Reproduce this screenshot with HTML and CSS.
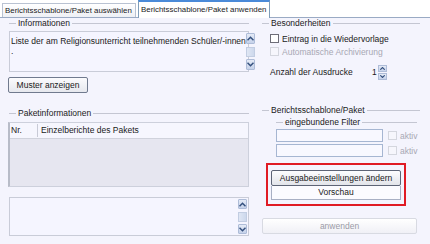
FILE: index.html
```html
<!DOCTYPE html>
<html>
<head>
<meta charset="utf-8">
<link rel="stylesheet" href="styles.css">
</head>
<body>
<div class="tabs">
  <div class="tab">Berichtsschablone/Paket auswählen</div>
  <div class="tab active">Berichtsschablone/Paket anwenden</div>
</div>
<div class="panel">
  <div class="col left">
    <div class="gtitle t1"><span class="lead"></span><span class="gt">Informationen</span><span class="rule"></span></div>
    <div class="memo m1">
      <div class="memotext">Liste der am Religionsunterricht teilnehmenden Schüler/-innen<br>.</div>
      <div class="sbar">
        <div class="sbtn"><svg class="ico" width="7" height="5" viewBox="0 0 7 5"><path d="M0.5 4.2 L3.5 1.2 L6.5 4.2" fill="none" stroke="#34507e" stroke-width="1.5"/></svg></div>
        <div class="thumb"></div>
        <div class="sbtn"><svg class="ico" width="7" height="5" viewBox="0 0 7 5"><path d="M0.5 0.8 L3.5 3.8 L6.5 0.8" fill="none" stroke="#34507e" stroke-width="1.5"/></svg></div>
      </div>
    </div>
    <div class="btn muster">Muster anzeigen</div>
    <div class="gtitle t2"><span class="lead"></span><span class="gt">Paketinformationen</span><span class="rule"></span></div>
    <div class="grid">
      <div class="ghead"><div class="gc nr">Nr.</div><div class="gc">Einzelberichte des Pakets</div></div>
      <div class="gbody"></div>
    </div>
    <div class="memo m2">
      <div class="memotext"></div>
      <div class="sbar">
        <div class="sbtn"><svg class="ico" width="7" height="5" viewBox="0 0 7 5"><path d="M0.5 4.2 L3.5 1.2 L6.5 4.2" fill="none" stroke="#34507e" stroke-width="1.5"/></svg></div>
        <div class="thumb"></div>
        <div class="sbtn"><svg class="ico" width="7" height="5" viewBox="0 0 7 5"><path d="M0.5 0.8 L3.5 3.8 L6.5 0.8" fill="none" stroke="#34507e" stroke-width="1.5"/></svg></div>
      </div>
    </div>
  </div>
  <div class="col right">
    <div class="gtitle t3"><span class="lead"></span><span class="gt">Besonderheiten</span><span class="rule"></span></div>
    <div class="chk r1"><span class="box"></span><span>Eintrag in die Wiedervorlage</span></div>
    <div class="chk r2 disabled"><span class="box"></span><span>Automatische Archivierung</span></div>
    <div class="count">
      <span>Anzahl der Ausdrucke</span>
      <div class="spin">
        <span class="val">1</span>
        <div class="spinbtns">
          <div class="sp"><svg class="ico" width="5" height="3" viewBox="0 0 5 3"><path d="M0.3 2.7 L2.5 0.5 L4.7 2.7" fill="none" stroke="#34507e" stroke-width="1.1"/></svg></div>
          <div class="sp"><svg class="ico" width="5" height="3" viewBox="0 0 5 3"><path d="M0.3 0.3 L2.5 2.5 L4.7 0.3" fill="none" stroke="#34507e" stroke-width="1.1"/></svg></div>
        </div>
      </div>
    </div>
    <div class="gtitle t4"><span class="lead"></span><span class="gt">Berichtsschablone/Paket</span><span class="rule"></span></div>
    <div class="gtitle t5"><span class="lead"></span><span class="gt">eingebundene Filter</span><span class="rule"></span></div>
    <div class="filter f1"><span class="inp"></span><span class="box dis"></span><span class="akt">aktiv</span></div>
    <div class="filter f2"><span class="inp"></span><span class="box dis"></span><span class="akt">aktiv</span></div>
    <div class="hl">
      <div class="btn ausg">Ausgabeeinstellungen ändern</div>
      <div class="vorschau">Vorschau</div>
    </div>
    <div class="btn anw">anwenden</div>
  </div>
</div>
</body>
</html>
```

FILE: styles.css
```css
html, body {
  margin: 0;
  padding: 0;
}
body {
  width: 430px;
  height: 244px;
  overflow: hidden;
  background: #f4f4fd;
  font-family: "Liberation Sans", Arial, sans-serif;
  font-size: 8.5px;
  color: #1a1a1a;
}
.ico {
  display: block;
  flex: none;
}
.tabs {
  height: 18px;
  background: #ffffff;
  border-bottom: 1px solid #9aaac4;
  box-sizing: border-box;
  display: flex;
  align-items: flex-end;
  padding-left: 2px;
  gap: 2px;
}
.tab {
  height: 14px;
  line-height: 13px;
  padding: 0 0 0 2px;
  box-sizing: border-box;
  border: 1px solid #b9c2d2;
  border-bottom: none;
  background: linear-gradient(#ffffff, #eef0f5);
  width: 134px;
  white-space: nowrap;
  font-size: 7.9px;
}
.tab.active {
  width: 132px;
  height: 18px;
  line-height: 15px;
  background: #ffffff;
  border: 1px solid #7f9db9;
  border-top: 2px solid #4a8ad8;
  border-bottom: none;
  margin-bottom: -1px;
}
.panel {
  display: flex;
  padding-left: 8px;
}
.col {
  display: flex;
  flex-direction: column;
}
.left {
  width: 241px;
}
.right {
  width: 158px;
  margin-left: 13px;
}
.gtitle {
  display: flex;
  align-items: center;
  height: 11px;
  white-space: nowrap;
}
.gtitle .lead {
  width: 7px;
  height: 1px;
  background: #c4c6d2;
  margin-right: 2px;
}
.gtitle .rule {
  flex: 1;
  height: 1px;
  background: #c4c6d2;
  margin-left: 2px;
}
.gt { line-height: 11px; }
.t1 { margin-top: 0px; margin-left: 1px; }
.memo {
  display: flex;
  border: 1px solid #c9ccd8;
  background: #f5f5ff;
  box-sizing: border-box;
  margin-left: 1px;
}
.m1 {
  height: 41px;
  margin-top: 2px;
}
.memotext {
  flex: 1;
  padding: 4px 0 0 1px;
  line-height: 10px;
  white-space: nowrap;
}
.sbar {
  width: 9px;
  margin: 1px 1px 1px 0;
  display: flex;
  flex-direction: column;
  justify-content: space-between;
}
.sbtn {
  height: 11px;
  background: linear-gradient(#e4eaf6, #c6d2ea);
  border: 1px solid #aebcd8;
  box-sizing: border-box;
  display: flex;
  align-items: center;
  justify-content: center;
  border-radius: 1px;
}
.thumb {
  height: 10px;
  background: linear-gradient(90deg, #dfe6f4, #cdd8ec);
  border: 1px solid #c2cde2;
  box-sizing: border-box;
}
.btn {
  box-sizing: border-box;
  border: 1px solid #707a8e;
  border-radius: 2px;
  background: linear-gradient(#fbfbfd, #e6e8ee);
  text-align: center;
  white-space: nowrap;
}
.muster {
  width: 80px;
  height: 16px;
  line-height: 14px;
  margin-top: 5px;
}
.t2 { margin-top: 15px; margin-left: 1px; }
.grid {
  margin-top: 3px;
  height: 65px;
  border: 1px solid #cdd0dc;
  border-left: 2px solid #b8bcc8;
  box-sizing: border-box;
  display: flex;
  flex-direction: column;
  background: #e6e6f0;
}
.ghead {
  height: 15px;
  background: #f6f6fe;
  border-bottom: 1px solid #d0d2dc;
  display: flex;
  align-items: center;
}
.gc {
  padding-left: 1px;
  height: 13px;
  line-height: 13px;
}
.gc.nr {
  width: 26px;
  border-right: 1px solid #c8cad6;
  margin-right: 2px;
}
.gbody { flex: 1; }
.m2 {
  height: 39px;
  margin-top: 10px;
}
.m2 .sbtn { height: 10px; }
.t3 { margin-top: 0px; }
.chk {
  display: flex;
  align-items: center;
  height: 13px;
  margin-left: 8px;
  white-space: nowrap;
}
.r1 { margin-top: 3px; }
.box {
  width: 9px;
  height: 9px;
  box-sizing: border-box;
  border: 1px solid #6d6d78;
  background: #ffffff;
  margin-right: 3px;
  flex: none;
}
.chk.disabled { color: #a8a8b4; }
.chk.disabled .box, .box.dis {
  border-color: #d4d6de;
  background: #f6f6fc;
}
.count {
  display: flex;
  align-items: center;
  margin-left: 8px;
  margin-top: 7px;
  height: 14px;
}
.spin {
  margin-left: 14px;
  display: flex;
  align-items: center;
  height: 14px;
}
.val {
  width: 10px;
  text-align: right;
  margin-right: 1px;
}
.spinbtns {
  display: flex;
  flex-direction: column;
  gap: 1px;
}
.sp {
  width: 9px;
  height: 7px;
  background: linear-gradient(#e4eaf6, #c6d2ea);
  border: 1px solid #aebcd8;
  box-sizing: border-box;
  display: flex;
  align-items: center;
  justify-content: center;
}
.t4 { margin-top: 26px; }
.t5 { margin-top: 1px; margin-left: 14px; margin-right: 3px; }
.filter {
  display: flex;
  align-items: center;
  margin-left: 14px;
  height: 13px;
}
.f1 { margin-top: 1px; }
.f2 { margin-top: 2px; }
.inp {
  width: 107px;
  height: 13px;
  box-sizing: border-box;
  border: 1px solid #a6b6d2;
  background: #f8f8ff;
  margin-right: 5px;
}
.akt { color: #a8a8b4; }
.hl {
  margin-top: 6px;
  margin-left: 4px;
  width: 140px;
  height: 43px;
  box-sizing: border-box;
  border: 2px solid #e01b24;
  padding: 5px 3px 0 3px;
  display: flex;
  flex-direction: column;
}
.ausg {
  height: 16px;
  line-height: 14px;
  border-color: #5d6476;
  border-radius: 2px;
  background: linear-gradient(#fdfdff, #e2e4ea);
}
.vorschau {
  height: 14px;
  line-height: 12px;
  box-sizing: border-box;
  border: 1px solid #a8b0c4;
  border-top: none;
  background: #fbfbff;
  text-align: center;
}
.anw {
  margin-top: 12px;
  width: 155px;
  height: 16px;
  line-height: 14px;
  color: #9a9aa6;
  border-color: #d8dae2;
  background: linear-gradient(#ffffff, #f0f0f6);
}
```
